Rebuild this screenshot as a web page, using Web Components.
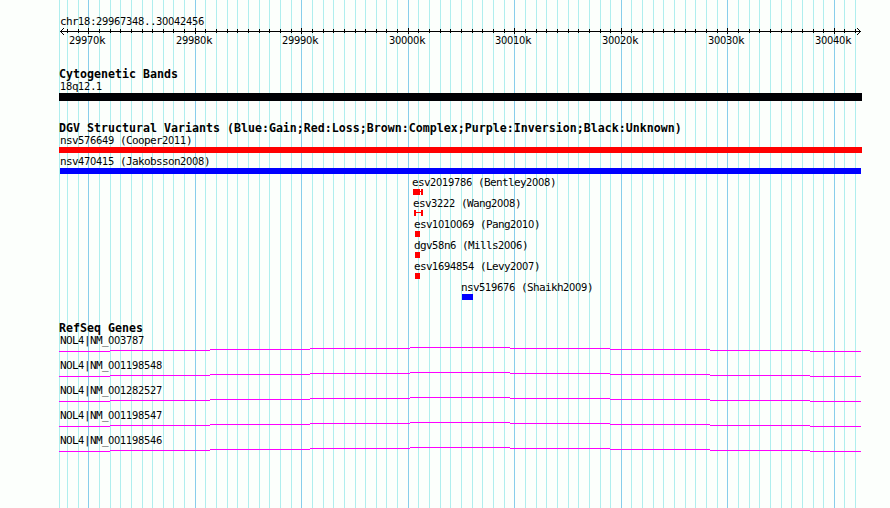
<!DOCTYPE html>
<html lang="en">
<head>
<meta charset="utf-8">
<title>chr18:29967348..30042456</title>
<style>
  body {
    margin: 0;
    background: #fcfffc;
  }
</style>
</head>
<body>
<genome-view>
  <genome-ruler label="chr18:29967348..30042456"></genome-ruler>
  <genome-track heading="Cytogenetic Bands" style="--gap: 22px">
    <genome-feature label="18q12.1" color="#000004" blocks="59-862" thickness="8"></genome-feature>
  </genome-track>
  <genome-track heading="DGV Structural Variants (Blue:Gain;Red:Loss;Brown:Complex;Purple:Inversion;Black:Unknown)" style="--gap: 19px">
    <genome-feature label="nsv576649 (Cooper2011)" color="#ff0000" blocks="59-862"></genome-feature>
    <genome-feature label="nsv470415 (Jakobsson2008)" color="#0000ff" blocks="60-861"></genome-feature>
    <genome-feature label="esv2019786 (Bentley2008)" at="412" color="#ff0000" blocks="413-420 421-423" link></genome-feature>
    <genome-feature label="esv3222 (Wang2008)" at="413" color="#ff0000" blocks="414-416 421-423" link></genome-feature>
    <genome-feature label="esv1010069 (Pang2010)" at="414" color="#ff0000" blocks="415-420"></genome-feature>
    <genome-feature label="dgv58n6 (Mills2006)" at="414" color="#ff0000" blocks="415-420"></genome-feature>
    <genome-feature label="esv1694854 (Levy2007)" at="414" color="#ff0000" blocks="415-420"></genome-feature>
    <genome-feature label="nsv519676 (Shaikh2009)" at="461" color="#0000ff" blocks="462-473"></genome-feature>
  </genome-track>
  <genome-track heading="RefSeq Genes" style="--gap: 20px">
    <genome-gene label="NOL4|NM_003787"></genome-gene>
    <genome-gene label="NOL4|NM_001198548"></genome-gene>
    <genome-gene label="NOL4|NM_001282527"></genome-gene>
    <genome-gene label="NOL4|NM_001198547"></genome-gene>
    <genome-gene label="NOL4|NM_001198546"></genome-gene>
  </genome-track>
</genome-view>

<script>
const START = 29967348;
const PX_PER_BASE = 800 / 75108;
const LEFT = 60;

function toPixel(base) {
  return Math.floor(LEFT + (base - START) * PX_PER_BASE + 0.5);
}

// one entry per kilobase in the visible region
const ticks = [];
for (let kb = 29968; kb <= 30042; kb++) {
  ticks.push({ kb, x: toPixel(kb * 1000), major: kb % 10 === 0 });
}

function rect(x, y, w, h, fill) {
  return `<rect x="${x}" y="${y}" width="${w}" height="${h}" fill="${fill}"/>`;
}

// digits use a face with a plain zero
function label(text) {
  return text.replace(/\d+/g, "<span>$&</span>");
}

const labelStyle = `
  svg {
    display: block;
    shape-rendering: crispEdges;
  }
  .label {
    height: 12px;
    font: 11px/14px "DejaVu Sans Mono", monospace;
    letter-spacing: -0.622px;
    white-space: pre;
    color: #000;
  }
  .label span {
    font-family: "DejaVu Sans Condensed", "DejaVu Sans", sans-serif;
    font-stretch: condensed;
    letter-spacing: -0.298px;
  }
`;

class GenomeView extends HTMLElement {
  constructor() {
    super();
    this.attachShadow({ mode: "open" });
    const lines = ticks
      .map((t) => rect(t.x, 0, 1, 508, t.major ? "#87ceeb" : "#afeeee"))
      .join("");
    this.shadowRoot.innerHTML = `
      <style>
        :host {
          display: grid;
          width: 890px;
          height: 508px;
          overflow: hidden;
        }
        svg, .tracks {
          grid-area: 1 / 1;
        }
        svg {
          display: block;
          shape-rendering: crispEdges;
        }
        .tracks {
          display: flex;
          flex-direction: column;
          padding-top: 15px;
          box-sizing: border-box;
          z-index: 1;
        }
      </style>
      <svg width="890" height="508">${rect(59, 0, 1, 508, "#afeeee")}${lines}</svg>
      <div class="tracks"><slot></slot></div>
    `;
  }
}

class GenomeRuler extends HTMLElement {
  constructor() {
    super();
    this.attachShadow({ mode: "open" });
  }

  connectedCallback() {
    const marks = ticks
      .map((t) => (t.major ? rect(t.x, 1, 1, 6, "#000") : rect(t.x, 2, 1, 4, "#000")))
      .join("");
    let arrows = "";
    for (let i = 1; i <= 3; i++) {
      arrows += rect(60 + i, 4 - i, 1, 1, "#000") + rect(60 + i, 4 + i, 1, 1, "#000");
      arrows += rect(860 - i, 4 - i, 1, 1, "#000") + rect(860 - i, 4 + i, 1, 1, "#000");
    }
    const majors = ticks.filter((t) => t.major);
    const names = majors
      .map((t, i) => {
        const next = majors[i + 1];
        const width = next ? next.x - t.x : 40;
        return `<div class="label" style="width: ${width}px">${label(t.kb + "k")}</div>`;
      })
      .join("");
    this.shadowRoot.innerHTML = `
      <style>
        :host { display: block; }
        ${labelStyle}
        .region { padding-left: 60px; }
        .names {
          display: flex;
          margin-top: -1px;
          padding-left: ${majors[0].x - 19}px;
        }
        .names .label { flex: none; }
      </style>
      <div class="label region">${label(this.getAttribute("label"))}</div>
      <svg width="890" height="8">
        ${rect(60, 4, 801, 1, "#000")}
        ${marks}
        ${arrows}
      </svg>
      <div class="names">${names}</div>
    `;
  }
}

class GenomeTrack extends HTMLElement {
  constructor() {
    super();
    this.attachShadow({ mode: "open" });
  }

  connectedCallback() {
    this.shadowRoot.innerHTML = `
      <style>
        :host {
          display: block;
          margin-top: var(--gap);
        }
        .heading {
          height: 12px;
          padding-left: 59px;
          font: bold 11.6px/13px "DejaVu Sans Mono", monospace;
          letter-spacing: 0.016px;
          white-space: nowrap;
          color: #000;
        }
      </style>
      <div class="heading">${this.getAttribute("heading")}</div>
      <slot></slot>
    `;
  }
}

class GenomeFeature extends HTMLElement {
  constructor() {
    super();
    this.attachShadow({ mode: "open" });
  }

  connectedCallback() {
    const color = this.getAttribute("color");
    const h = Number(this.getAttribute("thickness") || 6);
    const blocks = this.getAttribute("blocks").split(" ").map((b) => b.split("-").map(Number));
    let shapes = blocks.map(([a, b]) => rect(a, 1, b - a, h, color)).join("");
    if (this.hasAttribute("link")) {
      const from = blocks[0][1];
      shapes += rect(from, 3, blocks[1][0] - from, 1, color);
    }
    this.shadowRoot.innerHTML = `
      <style>
        :host { display: block; }
        ${labelStyle}
        .label { padding-left: ${this.getAttribute("at") || 60}px; }
      </style>
      <div class="label">${label(this.getAttribute("label"))}</div>
      <svg width="890" height="${h + 3}">${shapes}</svg>
    `;
  }
}

class GenomeGene extends HTMLElement {
  constructor() {
    super();
    this.attachShadow({ mode: "open" });
  }

  connectedCallback() {
    // the intron hat climbs one pixel per step up to the middle
    const stops = [59, 110, 210, 310, 410, 510, 610, 710, 810, 861];
    let line = "";
    for (let i = 0; i < stops.length - 1; i++) {
      line += rect(stops[i], 1 + Math.abs(4 - i), stops[i + 1] - stops[i], 1, "#ff00ff");
    }
    this.shadowRoot.innerHTML = `
      <style>
        :host { display: block; }
        ${labelStyle}
        .label { padding-left: 60px; }
      </style>
      <div class="label">${label(this.getAttribute("label"))}</div>
      <svg width="890" height="13">${line}</svg>
    `;
  }
}

customElements.define("genome-view", GenomeView);
customElements.define("genome-ruler", GenomeRuler);
customElements.define("genome-track", GenomeTrack);
customElements.define("genome-feature", GenomeFeature);
customElements.define("genome-gene", GenomeGene);
</script>
</body>
</html>
